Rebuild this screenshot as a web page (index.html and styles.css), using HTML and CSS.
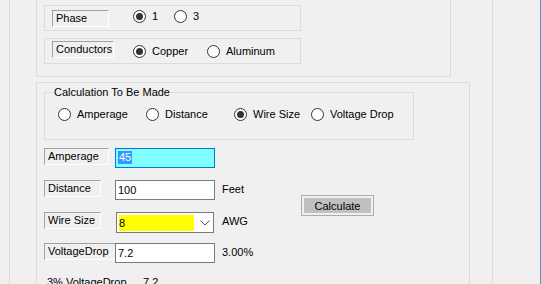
FILE: index.html
```html
<!DOCTYPE html>
<html lang="en">
<head>
  <meta charset="UTF-8" />
  <title>Voltage Drop Calculator</title>
  <link rel="stylesheet" href="styles.css">
</head>
<body>
  <div class="window">
    <div class="pane">

      <!-- Wire settings -->
      <div class="group group-top">
        <div class="box box-phase">
          <span class="caption cap-phase">Phase</span>
          <div class="options">
            <label class="opt opt-phase"><span class="radio checked"></span>1</label>
            <label class="opt"><span class="radio"></span>3</label>
          </div>
        </div>
        <div class="box box-cond">
          <span class="caption cap-cond">Conductors</span>
          <div class="options">
            <label class="opt opt-metal"><span class="radio checked"></span>Copper</label>
            <label class="opt"><span class="radio"></span>Aluminum</label>
          </div>
        </div>
      </div>

      <!-- Calculation -->
      <div class="group group-main">
        <fieldset class="calc">
          <legend>Calculation To Be Made</legend>
          <div class="calc-options">
            <label class="opt opt-calc"><span class="radio"></span>Amperage</label>
            <label class="opt opt-calc"><span class="radio"></span>Distance</label>
            <label class="opt opt-size"><span class="radio checked"></span>Wire Size</label>
            <label class="opt"><span class="radio"></span>Voltage Drop</label>
          </div>
        </fieldset>

        <div class="form">
          <span class="caption cap-amp">Amperage</span>
          <div class="field field-active"><span class="sel">45</span></div>
          <span class="unit"></span>
          <span></span>

          <span class="caption cap-dist">Distance</span>
          <div class="field">100</div>
          <span class="unit">Feet</span>
          <button class="calc-btn">Calculate</button>

          <span class="caption cap-wire">Wire Size</span>
          <div class="combo">
            <span class="combo-value">8</span>
            <svg class="chevron" width="10" height="6" viewBox="0 0 10 6"><path d="M0.5 0.5 L5 5 L9.5 0.5" fill="none" stroke="#555" stroke-width="1"/></svg>
          </div>
          <span class="unit">AWG</span>

          <span class="caption cap-drop">VoltageDrop</span>
          <div class="field">7.2</div>
          <span class="unit">3.00%</span>
          <span></span>
        </div>

        <div class="result">
          <span class="result-label">3% VoltageDrop</span>
          <span>7.2</span>
        </div>
      </div>

    </div>
  </div>
</body>
</html>
```

FILE: styles.css
```css
* {
  box-sizing: border-box;
  margin: 0;
  padding: 0;
}

body {
  font-family: "Liberation Sans", Arial, sans-serif;
  font-size: 11px;
  color: #000;
  background: #f0f0f0;
}

.window {
  display: flex;
  width: 541px;
  height: 284px;
  overflow: hidden;
  border-right: 1px solid #5b93c9;
}

.pane {
  margin-left: 9px;
  width: 484px;
  border-left: 1px solid #dcdcdc;
  border-right: 1px solid #dcdcdc;
}

/* Group boxes */
.group {
  margin-left: 26px;
  border: 1px solid #dcdcdc;
}

.group-top {
  width: 415px;
  margin-top: -10px;
  padding: 14px 7px 12px;
  display: flex;
  flex-direction: column;
  gap: 7px;
}

.group-main {
  width: 434px;
  margin-top: 5px;
  padding: 3px 7px 0;
  height: 260px;
}

.box {
  width: 257px;
  height: 26px;
  border: 1px solid #dcdcdc;
  display: grid;
  grid-template-columns: 81px auto;
  align-items: start;
  padding: 0 7px;
}

.box-phase {
  padding-top: 4px;
}

.box-cond {
  padding-top: 2px;
}

.box-phase .options {
  margin-top: 0;
}

.box-cond .options {
  margin-top: 4px;
}

.caption {
  justify-self: start;
  align-self: start;
  display: inline-block;
  height: 17px;
  line-height: 15px;
  padding: 0 3px;
  border-top: 1px solid #a0a0a0;
  border-left: 1px solid #a0a0a0;
  border-bottom: 1px solid #fff;
  border-right: 1px solid #fff;
  white-space: nowrap;
}

.cap-phase { width: 57px; }
.cap-cond { width: 62px; }

.options {
  display: flex;
}

/* Radio buttons */
.opt {
  display: flex;
  align-items: center;
  height: 13px;
  line-height: 13px;
  white-space: nowrap;
}

.opt-phase {
  width: 41px;
}

.opt-metal {
  width: 74px;
}

.opt-calc {
  width: 88px;
}

.opt-size {
  width: 77px;
}

.radio {
  width: 13px;
  height: 13px;
  border: 1px solid #333;
  border-radius: 50%;
  background: #fff;
  margin-right: 6px;
  display: flex;
  align-items: center;
  justify-content: center;
}

.radio.checked::after {
  content: "";
  width: 7px;
  height: 7px;
  border-radius: 50%;
  background: #333;
}

/* Calculation choice */
.calc {
  width: 370px;
  height: 54px;
  border: 1px solid #dcdcdc;
  padding: 0 0 0 13px;
}

.calc legend {
  margin-left: -5px;
  padding: 0 1px;
  line-height: 13px;
}

.calc-options {
  display: flex;
  margin-top: 9px;
}

/* Inputs */
.form {
  display: grid;
  grid-template-columns: 71px 107px 79px auto;
  grid-template-rows: 32px 32px 31px 33px;
  margin-top: 8px;
}

.cap-amp { width: 65px; }
.cap-dist { width: 57px; }
.cap-wire { width: 57px; }
.cap-drop { width: 72px; }

.field {
  width: 100px;
  height: 20px;
  border: 1px solid #7a7a7a;
  background: #fff;
  padding: 0 2px;
  line-height: 18px;
}

.field-active {
  border-color: #0078d7;
  background: #80ffff;
  padding-top: 2px;
  line-height: 13px;
}

.sel {
  display: inline-block;
  background: #3399ff;
  color: #fff;
  padding: 0 1px;
}

.unit {
  line-height: 18px;
}

.combo {
  margin-left: 1px;
  width: 98px;
  height: 21px;
  border: 1px solid #7a7a7a;
  background: #fff;
  padding: 2px;
  display: flex;
  align-items: center;
}

.combo-value {
  width: 75px;
  height: 16px;
  background: #ffff00;
  line-height: 16px;
}

.chevron {
  margin-left: 6px;
}

.calc-btn {
  grid-row: span 2;
  align-self: start;
  margin-top: 15px;
  width: 73px;
  height: 21px;
  border: 1px solid #adadad;
  box-shadow: inset 0 0 0 2px #f0f0f0;
  background: #c0c0c0;
  font-family: inherit;
  font-size: 11px;
  color: #000;
}

.result {
  display: flex;
  padding-left: 3px;
}

.result-label {
  width: 96px;
}
```
